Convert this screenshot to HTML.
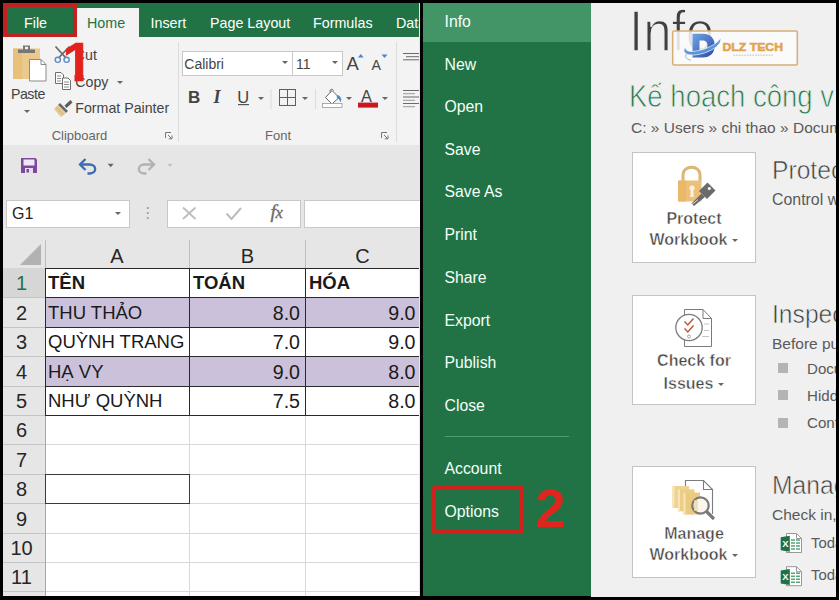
<!DOCTYPE html>
<html lang="vi">
<head>
<meta charset="utf-8">
<title>Excel File Options</title>
<style>
html,body{margin:0;padding:0;}
body{width:840px;height:600px;overflow:hidden;background:#000;position:relative;font-family:"Liberation Sans",sans-serif;}
.a{position:absolute;}
.t{position:absolute;white-space:nowrap;line-height:1;transform-origin:left center;}
#left{left:3px;top:3px;width:416.5px;height:593px;background:#e6e6e6;overflow:hidden;}
#tabs{left:0;top:0;width:416px;height:34px;background:#217346;}
#ribbon{left:0;top:34px;width:416px;height:108px;background:#f3f3f3;}
.tab{color:#fff;font-size:14.3px;}
.rt{color:#444;font-size:14.2px;}
.gl{color:#666;font-size:13px;}
.box{background:#fff;border:1px solid #c8c8c8;box-sizing:border-box;}
.arr{width:0;height:0;margin-left:0.5px;margin-top:0.3px;border-left:3px solid transparent;border-right:3px solid transparent;border-top:3.4px solid #666;}
#grid{left:0;top:237px;width:416px;height:356px;background:#fff;}
.hl{height:1px;background:#d9d9d9;left:42px;width:374px;}
.vl{width:1px;background:#d9d9d9;top:0;height:356px;}
.rn{width:42px;text-align:center;font-size:20px;color:#262626;left:-2.5px;}
.mi{color:#f4fff8;font-size:15.8px;}
.bt{color:#454545;font-size:16px;font-weight:bold;text-align:center;-webkit-text-stroke:0.45px #fff;}
.cell{font-size:18.5px;color:#1a1a1a;}
</style>
</head>
<body>
<div id="left" class="a">
  <!-- tab bar -->
  <div id="tabs" class="a">
    <div class="a" style="left:0;top:0;width:73.5px;height:34.5px;border:4px solid #c2211f;border-radius:1.5px;box-sizing:border-box;background:#217346;"></div>
    <div class="t tab" style="left:21px;top:12.5px;">File</div>
    <div class="a" style="left:74px;top:5px;width:62px;height:29px;background:#f3f3f3;"></div>
    <div class="t tab" style="left:84px;top:12.5px;color:#217346;">Home</div>
    <div class="t tab" style="left:147.5px;top:12.5px;">Insert</div>
    <div class="t tab" style="left:207px;top:12.5px;">Page Layout</div>
    <div class="t tab" style="left:310px;top:12.5px;">Formulas</div>
    <div class="t tab" style="left:393px;top:12.5px;">Data</div>
  </div>
  <!-- ribbon -->
  <div id="ribbon" class="a">
    <div class="t rt" style="left:8px;top:50.0px;letter-spacing:-0.5px;">Paste</div>
    <div class="a arr" style="left:20.5px;top:73px;border-top-color:#666;"></div>
    <div class="t rt" style="left:71.8px;top:10.5px;">Cut</div>
    <div class="t rt" style="left:72.3px;top:38.0px;">Copy</div>
    <div class="a arr" style="left:113.5px;top:43.5px;border-top-color:#666;"></div>
    <div class="t rt" style="left:72.3px;top:64.0px;">Format Painter</div>
    <div class="t gl" style="left:48.7px;top:91.6px;">Clipboard</div>
    <div class="a" style="left:175px;top:5px;width:1px;height:100px;background:#dcdcdc;"></div>
    <div class="a box" style="left:179px;top:13.5px;width:111px;height:25px;"></div>
    <div class="t rt" style="left:181.3px;top:20.1px;font-size:14px;">Calibri</div>
    <div class="a arr" style="left:278.9px;top:24px;border-top-color:#666;"></div>
    <div class="a box" style="left:289px;top:13.5px;width:50.5px;height:25px;"></div>
    <div class="t rt" style="left:293px;top:20.1px;font-size:14px;">11</div>
    <div class="a arr" style="left:328.7px;top:24px;border-top-color:#666;"></div>
    <div class="t rt" style="left:343.5px;top:17.6px;font-size:18.4px;">A</div>
    <div class="t rt" style="left:368.6px;top:21.1px;font-size:14.2px;">A</div>
    <div class="t rt" style="left:185px;top:51.5px;font-size:17px;font-weight:bold;">B</div>
    <div class="t rt" style="left:210.5px;top:51.0px;font-size:18px;font-style:italic;font-weight:bold;font-family:'Liberation Serif',serif;">I</div>
    <div class="t rt" style="left:234.3px;top:51.7px;font-size:16.5px;">U</div>
    <div class="a arr" style="left:254.4px;top:59.5px;border-top-color:#666;"></div>
    <div class="a arr" style="left:298.7px;top:59.5px;border-top-color:#666;"></div>
    <div class="a arr" style="left:342.5px;top:59.5px;border-top-color:#666;"></div>
    <div class="a arr" style="left:378.5px;top:59.5px;border-top-color:#666;"></div>
    <div class="t rt" style="left:358px;top:51.2px;font-size:16.3px;">A</div>
    <div class="t gl" style="left:262px;top:91.6px;">Font</div>
    <div class="a" style="left:392.5px;top:5px;width:1px;height:100px;background:#dcdcdc;"></div>
  </div>
  <!-- QAT -->
  <!-- formula bar -->
  <div class="a box" style="left:3px;top:197px;width:124px;height:28px;"></div>
  <div class="t" style="left:9px;top:203px;font-size:16px;color:#222;">G1</div>
  <div class="a arr" style="left:111px;top:209px;"></div>
  <div class="a box" style="left:164px;top:197px;width:134px;height:28px;"></div>
  <div class="a box" style="left:301px;top:197px;width:120px;height:28px;"></div>
  <!-- grid -->
  <div id="grid" class="a">
    <div class="a" style="left:0;top:0;width:416px;height:28px;background:#e6e6e6;"></div>
    <div class="a" style="left:0;top:0;width:42px;height:356px;background:#e6e6e6;"></div>
    <div class="a" style="left:0;top:28px;width:42px;height:29px;background:#d6d6d6;"></div>
    <svg class="a" style="left:17px;top:4px;" width="22" height="22" viewBox="0 0 22 22"><path d="M21 0V21H0Z" fill="#b2b2b2"/></svg>
    <div class="a" style="left:42px;top:0;width:1px;height:28px;background:#bdbdbd;"></div>
    <div class="a" style="left:186px;top:0;width:1px;height:28px;background:#bdbdbd;"></div>
    <div class="a" style="left:302px;top:0;width:1px;height:28px;background:#bdbdbd;"></div>
    <div class="t" style="left:94px;top:5.5px;width:40px;text-align:center;font-size:20px;color:#262626;">A</div>
    <div class="t" style="left:224.5px;top:5.5px;width:40px;text-align:center;font-size:20px;color:#262626;">B</div>
    <div class="t" style="left:339.5px;top:5.5px;width:40px;text-align:center;font-size:20px;color:#262626;">C</div>
    <div class="a hl" style="top:204px;"></div>
    <div class="a hl" style="top:234px;"></div>
    <div class="a hl" style="top:263px;"></div>
    <div class="a hl" style="top:293px;"></div>
    <div class="a hl" style="top:322px;"></div>
    <div class="a hl" style="top:351px;"></div>
    <div class="a" style="left:0;top:57px;width:42px;height:1px;background:#c4c4c4;"></div>
    <div class="a" style="left:0;top:87px;width:42px;height:1px;background:#c4c4c4;"></div>
    <div class="a" style="left:0;top:116px;width:42px;height:1px;background:#c4c4c4;"></div>
    <div class="a" style="left:0;top:146px;width:42px;height:1px;background:#c4c4c4;"></div>
    <div class="a" style="left:0;top:175px;width:42px;height:1px;background:#c4c4c4;"></div>
    <div class="a" style="left:0;top:204px;width:42px;height:1px;background:#c4c4c4;"></div>
    <div class="a" style="left:0;top:234px;width:42px;height:1px;background:#c4c4c4;"></div>
    <div class="a" style="left:0;top:263px;width:42px;height:1px;background:#c4c4c4;"></div>
    <div class="a" style="left:0;top:293px;width:42px;height:1px;background:#c4c4c4;"></div>
    <div class="a" style="left:0;top:322px;width:42px;height:1px;background:#c4c4c4;"></div>
    <div class="a" style="left:0;top:351px;width:42px;height:1px;background:#c4c4c4;"></div>
    <div class="a vl" style="left:186px;top:176px;height:180px;"></div>
    <div class="a vl" style="left:302px;top:176px;height:180px;"></div>
    <div class="a" style="left:42px;top:176px;width:1px;height:180px;background:#a8a8a8;"></div>
    <div class="a" style="left:43px;top:58px;width:373px;height:29px;background:#ccc1da;"></div>
    <div class="a" style="left:43px;top:117px;width:373px;height:29px;background:#ccc1da;"></div>
    <div class="a" style="left:42px;top:28px;width:374px;height:1px;background:#2a2a2a;"></div>
    <div class="a" style="left:42px;top:57px;width:374px;height:1px;background:#2a2a2a;"></div>
    <div class="a" style="left:42px;top:87px;width:374px;height:1px;background:#2a2a2a;"></div>
    <div class="a" style="left:42px;top:116px;width:374px;height:1px;background:#2a2a2a;"></div>
    <div class="a" style="left:42px;top:146px;width:374px;height:1px;background:#2a2a2a;"></div>
    <div class="a" style="left:42px;top:175px;width:374px;height:1px;background:#2a2a2a;"></div>
    <div class="a" style="left:42px;top:28px;width:1px;height:148px;background:#2a2a2a;"></div>
    <div class="a" style="left:186px;top:28px;width:1px;height:148px;background:#2a2a2a;"></div>
    <div class="a" style="left:302px;top:28px;width:1px;height:148px;background:#2a2a2a;"></div>
    <div class="t rn" style="top:33.0px;color:#217346;">1</div>
    <div class="t rn" style="top:62.5px;color:#262626;">2</div>
    <div class="t rn" style="top:92.0px;color:#262626;">3</div>
    <div class="t rn" style="top:121.5px;color:#262626;">4</div>
    <div class="t rn" style="top:151.0px;color:#262626;">5</div>
    <div class="t rn" style="top:180.0px;color:#262626;">6</div>
    <div class="t rn" style="top:209.5px;color:#262626;">7</div>
    <div class="t rn" style="top:239.0px;color:#262626;">8</div>
    <div class="t rn" style="top:268.5px;color:#262626;">9</div>
    <div class="t rn" style="top:298.0px;color:#262626;">10</div>
    <div class="t rn" style="top:327.0px;color:#262626;">11</div>
    <div class="t cell" style="left:45px;top:34.3px;font-weight:bold;">TÊN</div>
    <div class="t cell" style="left:190px;top:34.3px;font-weight:bold;">TOÁN</div>
    <div class="t cell" style="left:306px;top:34.3px;font-weight:bold;">HÓA</div>
    <div class="t cell" style="left:45px;top:63.8px;">THU THẢO</div>
    <div class="t cell" style="left:187px;width:110px;text-align:right;top:63.599999999999994px;font-size:19.6px;">8.0</div>
    <div class="t cell" style="left:303px;width:109.5px;text-align:right;top:63.599999999999994px;font-size:19.6px;">9.0</div>
    <div class="t cell" style="left:45px;top:93.3px;">QUỲNH TRANG</div>
    <div class="t cell" style="left:187px;width:110px;text-align:right;top:93.1px;font-size:19.6px;">7.0</div>
    <div class="t cell" style="left:303px;width:109.5px;text-align:right;top:93.1px;font-size:19.6px;">9.0</div>
    <div class="t cell" style="left:45px;top:122.8px;">HẠ VY</div>
    <div class="t cell" style="left:187px;width:110px;text-align:right;top:122.6px;font-size:19.6px;">9.0</div>
    <div class="t cell" style="left:303px;width:109.5px;text-align:right;top:122.6px;font-size:19.6px;">8.0</div>
    <div class="t cell" style="left:45px;top:152.3px;">NHƯ QUỲNH</div>
    <div class="t cell" style="left:187px;width:110px;text-align:right;top:152.10000000000002px;font-size:19.6px;">7.5</div>
    <div class="t cell" style="left:303px;width:109.5px;text-align:right;top:152.10000000000002px;font-size:19.6px;">8.0</div>
    <div class="a" style="left:42px;top:234px;width:145px;height:30px;border:1px solid #3a3a3a;box-sizing:border-box;"></div>
  </div>
</div>
<div id="menu" class="a" style="left:422.5px;top:3px;width:168.5px;height:593px;background:#217346;">
  <div class="a" style="left:0;top:0;width:169px;height:39px;background:#439467;"></div>
  <div class="t mi" style="left:22px;top:10.8px;">Info</div>
  <div class="t mi" style="left:22px;top:53.8px;">New</div>
  <div class="t mi" style="left:22px;top:95.8px;">Open</div>
  <div class="t mi" style="left:22px;top:138.8px;">Save</div>
  <div class="t mi" style="left:22px;top:180.8px;">Save As</div>
  <div class="t mi" style="left:22px;top:223.8px;">Print</div>
  <div class="t mi" style="left:22px;top:266.8px;">Share</div>
  <div class="t mi" style="left:22px;top:309.8px;">Export</div>
  <div class="t mi" style="left:22px;top:351.8px;">Publish</div>
  <div class="t mi" style="left:22px;top:394.8px;">Close</div>
  <div class="t mi" style="left:22px;top:457.5px;">Account</div>
  <div class="t mi" style="left:22px;top:501.0px;">Options</div>
  <div class="a" style="left:22px;top:433px;width:124px;height:1px;background:#4e9a70;"></div>
  <div class="a" style="left:9.5px;top:482.5px;width:92px;height:48px;border:4px solid #cf221d;border-radius:1.5px;box-sizing:border-box;"></div>
  <div class="t" style="left:113px;top:478px;font-size:54px;font-weight:bold;color:#e0251f;">2</div>
</div>
<div id="info" class="a" style="left:591px;top:3px;width:245px;height:594px;background:#f0f0f0;overflow:hidden;">
  <div class="t" style="left:37.5px;top:-1.4px;font-size:58px;color:#404040;transform:scaleX(0.88);-webkit-text-stroke:1.5px #f0f0f0;">Info</div>
  <div class="t" style="left:38px;top:78.3px;font-size:31px;color:#257a4c;transform:scaleX(0.888);-webkit-text-stroke:0.8px #f0f0f0;">Kế hoạch công v<span style="margin-left:4px">iệc</span></div>
  <div class="t" style="left:40px;top:117.4px;font-size:15.5px;color:#5a5a5a;">C: » Users » chi thao » Documents</div>
  <div class="a box" style="left:41px;top:148.5px;width:124px;height:111.0px;border-color:#c4c4c4;"></div>
  <div class="t bt" style="left:41px;width:124px;top:207.6px;">Protect</div>
  <div class="t bt" style="left:41px;width:124px;top:228.7px;">Workbook<span class="arr" style="display:inline-block;vertical-align:middle;margin-left:5px;border-top-color:#666;"></span></div>
  <div class="a box" style="left:41px;top:292px;width:124px;height:110px;border-color:#c4c4c4;"></div>
  <div class="t bt" style="left:41px;width:124px;top:350.2px;">Check for</div>
  <div class="t bt" style="left:41px;width:124px;top:372.8px;">Issues<span class="arr" style="display:inline-block;vertical-align:middle;margin-left:5px;border-top-color:#666;"></span></div>
  <div class="a box" style="left:41px;top:463px;width:124px;height:111.5px;border-color:#c4c4c4;"></div>
  <div class="t bt" style="left:41px;width:124px;top:523.0px;">Manage</div>
  <div class="t bt" style="left:41px;width:124px;top:543.8px;">Workbook<span class="arr" style="display:inline-block;vertical-align:middle;margin-left:5px;border-top-color:#666;"></span></div>
  <div class="t" style="left:181px;top:153.5px;font-size:26.5px;color:#3c3c3c;transform:scaleX(0.93);-webkit-text-stroke:0.6px #f0f0f0;">Protect Workbook</div>
  <div class="t" style="left:181px;top:189.1px;font-size:15.9px;color:#5a5a5a;">Control what types</div>
  <div class="t" style="left:181px;top:298.0px;font-size:26.5px;color:#3c3c3c;transform:scaleX(0.93);-webkit-text-stroke:0.6px #f0f0f0;">Inspect Workbook</div>
  <div class="t" style="left:181px;top:333.4px;font-size:15.5px;color:#5a5a5a;">Before publishing</div>
  <div class="a" style="left:187px;top:360px;width:10px;height:10px;background:#b4b4b4;"></div>
  <div class="t" style="left:216px;top:357.9px;font-size:15.1px;color:#5a5a5a;">Document</div>
  <div class="a" style="left:187px;top:387px;width:10px;height:10px;background:#b4b4b4;"></div>
  <div class="t" style="left:216px;top:384.9px;font-size:15.1px;color:#5a5a5a;">Hidden</div>
  <div class="a" style="left:187px;top:414.5px;width:10px;height:10px;background:#b4b4b4;"></div>
  <div class="t" style="left:216px;top:412.4px;font-size:15.1px;color:#5a5a5a;">Content</div>
  <div class="t" style="left:181px;top:468.6px;font-size:26.5px;color:#3c3c3c;transform:scaleX(0.93);-webkit-text-stroke:0.6px #f0f0f0;">Manage Workbook</div>
  <div class="t" style="left:181px;top:503.8px;font-size:15.5px;color:#5a5a5a;">Check in, check out</div>
  <div class="t" style="left:220px;top:532.7px;font-size:14.9px;color:#5a5a5a;">Today</div>
  <div class="t" style="left:220px;top:565.4px;font-size:14.9px;color:#5a5a5a;">Today</div>
</div>
<div class="a" style="left:836px;top:0;width:3px;height:600px;background:#000;"></div>
<div class="a" style="left:839px;top:0;width:1px;height:600px;background:#fff;"></div>
<!--ICONS-->
<svg class="a" width="840" height="600" viewBox="0 0 840 600" style="left:0;top:0;font-family:'Liberation Sans',sans-serif;">
  <!-- paste clipboard -->
  <g>
    <rect x="13" y="48.5" width="27" height="30.5" fill="#ebc98b"/>
    <rect x="13" y="48.5" width="9" height="30.5" fill="#e8c07a"/>
    <path d="M18 53V49.5H23V45.5H30V49.5H35V53Z" fill="#777"/>
    <rect x="25" y="46.8" width="3" height="2.4" fill="#f3f3f3"/>
    <path d="M29.5 59.5H41L46 64.5V81H29.5Z" fill="#fff" stroke="#8a8a8a" stroke-width="1"/>
    <path d="M41 59.5V64.5H46" fill="none" stroke="#8a8a8a" stroke-width="1"/>
  </g>
  <!-- scissors -->
  <g fill="none">
    <path d="M55.5 46.5L66 58M69.5 46.5L58.5 58" stroke="#6b6b6b" stroke-width="1.8"/>
    <circle cx="57.8" cy="59.8" r="2.6" stroke="#5b8cc6" stroke-width="1.4"/>
    <circle cx="66.6" cy="59.8" r="2.6" stroke="#5b8cc6" stroke-width="1.4"/>
  </g>
  <!-- copy -->
  <g fill="#fff" stroke="#6e6e6e" stroke-width="1">
    <path d="M55.5 72.5H61L63.5 75V83.5H55.5Z"/>
    <path d="M57 76H61M57 78.5H61M57 81H61" stroke-width="0.8"/>
    <path d="M62.5 78H68L70.5 80.5V89.5H62.5Z"/>
    <path d="M64 82H69M64 84.5H69M64 87H69" stroke-width="0.8"/>
  </g>
  <!-- format painter -->
  <g>
    <path d="M64.5 105.5L70.5 100L72.5 102.5L66.5 108Z" fill="#5c5c5c"/>
    <path d="M60 103L68 111L66 113L58 105Z" fill="#6a6a6a"/>
    <path d="M58 105L66 113L61 117L54 109Z" fill="#e3c98f"/>
    <path d="M56 107L63.5 115" stroke="#cfb070" stroke-width="0.8"/>
  </g>
  <!-- dialog launchers -->
  <g fill="none" stroke="#777" stroke-width="1">
    <path d="M171 132.5H165.5V138"/><path d="M168 135L171.5 138.5M172 135.5V138.8H168.8"/>
    <path d="M387 132.5H381.5V138"/><path d="M384 135L387.5 138.5M388 135.5V138.8H384.8"/>
  </g>
  <!-- grow / shrink markers -->
  <path d="M358 57.5L360.8 54L363.6 57.5Z" fill="#4d86c6"/>
  <path d="M381.5 54.5H387.5L384.5 58Z" fill="#4d86c6"/>
  <!-- U underline -->
  <rect x="238" y="104" width="11" height="1.2" fill="#555"/>
  <!-- small separators in font row -->
  <rect x="270.5" y="89" width="1" height="20" fill="#dcdcdc"/>
  <rect x="315" y="89" width="1" height="20" fill="#dcdcdc"/>
  <!-- borders icon -->
  <g fill="none" stroke="#5e5e5e" stroke-width="1">
    <rect x="279.5" y="89.5" width="16" height="16"/>
    <path d="M287.5 89.5V105.5M279.5 97.5H295.5"/>
  </g>
  <!-- fill bucket -->
  <g fill="none">
    <path d="M332 90.5L339 97.5L332 104L325.5 97.5Z" fill="#fff" stroke="#666" stroke-width="1"/>
    <path d="M330.5 92.5C329 89.5 332 88 333.5 90.5" stroke="#666" stroke-width="1"/>
    <path d="M337.5 95.5C340 96 341.5 98.5 340.5 101.5C339.5 99 338.5 98 337 97.5Z" fill="#4d86c6" stroke="#4d86c6" stroke-width="0.8"/>
    <rect x="322.5" y="103.5" width="19.5" height="4" fill="#fff" stroke="#999" stroke-width="0.8"/>
  </g>
  <!-- font color bar -->
  <rect x="358" y="102.6" width="20" height="5" fill="#c9171e"/>
  <!-- align icons at right edge -->
  <g stroke="#6a6a6a" stroke-width="1">
    <path d="M403 53.5H419M406 56.7H419M403 59.8H419" />
    <path d="M403 90.5H419M403 97H419M403 103.5H419"/>
    <path d="M403 93.7H415M403 100.3H415M403 106.7H415" stroke="#9a9a9a"/>
  </g>
  <!-- save -->
  <g>
    <path d="M21 158H35.5L37 159.5V173H21Z" fill="#7c4a9c"/>
    <rect x="23.5" y="159.5" width="11" height="6" fill="#f0e8f4"/>
    <rect x="25" y="168" width="8" height="5" fill="#e6dcec"/>
    <rect x="26.5" y="169" width="2.5" height="3.5" fill="#7c4a9c"/>
  </g>
  <!-- undo -->
  <g fill="none" stroke="#3c6cb2" stroke-width="2.3">
    <path d="M80.5 164.5H89.5C97 164.5 97 173 90 173.5H87.5"/>
    <path d="M85.5 159L80 164.5L85.5 170"/>
  </g>
  <!-- redo -->
  <g fill="none" stroke="#b2b2b2" stroke-width="2.3">
    <path d="M153.5 164.5H144.5C137 164.5 137 173 144 173.5H146.5"/>
    <path d="M148.5 159L154 164.5L148.5 170"/>
  </g>
  <path d="M107.7 163.8H113.7L110.7 167.2Z" fill="#666"/>
  <path d="M167.2 163.8H172.8L170 167Z" fill="#c6c6c6"/>
  <!-- formula bar dots -->
  <g fill="#9a9a9a"><circle cx="147.8" cy="208" r="1.1"/><circle cx="147.8" cy="213" r="1.1"/><circle cx="147.8" cy="218" r="1.1"/></g>
  <!-- X and check -->
  <path d="M183 207.5L195.5 219M195.5 207.5L183 219" stroke="#bdbdbd" stroke-width="1.8" fill="none"/>
  <path d="M226.5 213.5L231.5 219L241 208" stroke="#bdbdbd" stroke-width="2" fill="none"/>
  <!-- fx -->
  <text x="270.5" y="218.3" style="font-family:'Liberation Serif',serif;" font-style="italic" font-size="19.5" fill="#6a6a6a" stroke="#6a6a6a" stroke-width="0.35">f<tspan font-size="16.5" dx="-0.3">x</tspan></text>
  <!-- red number 1 -->
  <clipPath id="c1"><rect x="55" y="36" width="40" height="38.6"/><rect x="74.5" y="74" width="9" height="10"/></clipPath>
  <text x="62.5" y="80.9" font-size="55" font-weight="bold" fill="#e3221c" stroke="#e3221c" stroke-width="0.7" clip-path="url(#c1)">1</text>
  <!-- lock + key -->
  <g>
    <path d="M683 181.5V175C683 164.5 700 164.5 700 175V181.5" fill="none" stroke="#dcb676" stroke-width="3"/>
    <rect x="678" y="180.5" width="23.5" height="21" rx="1" fill="#ecc078"/>
    <rect x="678" y="180.5" width="8" height="21" rx="1" fill="#e9b868"/>
    <circle cx="692" cy="188" r="2.6" fill="#fbf1dc"/>
    <path d="M690.8 189H693.2L693.8 197H690.2Z" fill="#fbf1dc"/>
    <path d="M707.5 182.5L715.5 190.5L707 199L699 191Z" fill="#6b6b6b"/>
    <path d="M701.5 193.5L705 197L694 206L691.5 203.5Z" fill="#6b6b6b"/>
    <path d="M692 204.5L698 199.5" stroke="#e9e9e9" stroke-width="0.9"/>
    <circle cx="709.3" cy="188.6" r="1.5" fill="#fff"/>
  </g>
  <!-- check for issues -->
  <g fill="none">
    <path d="M684.5 309.5H703L711.5 318.5V346.5H684.5Z" fill="#fff" stroke="#7a7a7a" stroke-width="1"/>
    <path d="M703 309.5V318.5H711.5" stroke="#7a7a7a" stroke-width="1"/>
    <path d="M704 324H709M704 330.5H709M702 336.5H709" stroke="#c4c4c4" stroke-width="1"/>
    <circle cx="689" cy="327.5" r="13.2" fill="#fff" stroke="#7c7c7c" stroke-width="1.3"/>
    <path d="M684.5 321.5L687.8 325L693.5 318.5" stroke="#b9573a" stroke-width="1.4"/>
    <path d="M684.5 328.5L687.8 332L693.5 325.5" stroke="#b9573a" stroke-width="1.4"/>
    <circle cx="689" cy="336.5" r="1.5" stroke="#9a9a9a" stroke-width="0.9"/>
  </g>
  <!-- manage workbook -->
  <g fill="none">
    <path d="M685.5 486V480.5H703.5L712.5 489.5V514" stroke="#7c7c7c" stroke-width="1.1"/>
    <path d="M703.5 480.5V489.5H712.5" stroke="#7c7c7c" stroke-width="1.1"/>
    <rect x="672.5" y="486" width="16.5" height="22" fill="#eed392"/><rect x="672.5" y="486" width="2" height="22" fill="#f6e5b6"/>
    <rect x="678" y="489.3" width="16.5" height="22" fill="#ecce88"/><rect x="678" y="489.3" width="2" height="22" fill="#f6e5b6"/>
    <rect x="683.5" y="492.6" width="16.5" height="22" fill="#ebca80"/><rect x="683.5" y="492.6" width="2" height="22" fill="#f6e5b6"/>
    <circle cx="700.5" cy="505.5" r="8.2" fill="#fbf6ea" stroke="#7a7a7a" stroke-width="2.2"/>
    <path d="M694 500H698V511H694Z" fill="#eed9a6" opacity="0.8"/>
    <path d="M706.5 511.5L714 519" stroke="#7a7a7a" stroke-width="3.2"/>
  </g>
  <!-- excel file icons -->
  <g id="xl1">
    <path d="M786.5 533.5H796.5L801.5 538.5V552.5H786.5Z" fill="#fff" stroke="#8c8c8c" stroke-width="0.9"/>
    <path d="M796.5 533.5V538.5H801.5" fill="none" stroke="#8c8c8c" stroke-width="0.9"/>
    <path d="M791 540H795M796 540H800M791 543H795M796 543H800M791 546H795M796 546H800M791 549H795M796 549H800" stroke="#5aa37c" stroke-width="1.6"/>
    <path d="M780.7 537.3L789.8 535.8V551.8L780.7 550.2Z" fill="#1f7246"/>
    <text x="782.3" y="547.3" font-size="9.5" font-weight="bold" fill="#fff">X</text>
  </g>
  <g id="xl2" transform="translate(0,33.2)">
    <path d="M786.5 533.5H796.5L801.5 538.5V552.5H786.5Z" fill="#fff" stroke="#8c8c8c" stroke-width="0.9"/>
    <path d="M796.5 533.5V538.5H801.5" fill="none" stroke="#8c8c8c" stroke-width="0.9"/>
    <path d="M791 540H795M796 540H800M791 543H795M796 543H800M791 546H795M796 546H800M791 549H795M796 549H800" stroke="#5aa37c" stroke-width="1.6"/>
    <path d="M780.7 537.3L789.8 535.8V551.8L780.7 550.2Z" fill="#1f7246"/>
    <text x="782.3" y="547.3" font-size="9.5" font-weight="bold" fill="#fff">X</text>
  </g>
  <!-- DLZ TECH watermark -->
  <g>
    <rect x="672.7" y="31" width="124.6" height="34" rx="1.5" fill="#fbfbfb" fill-opacity="0.86" stroke="#d8ae76" stroke-width="1.5"/>
    <defs><linearGradient id="dg" x1="0" y1="0" x2="1" y2="1"><stop offset="0" stop-color="#6fa5e4"/><stop offset="0.55" stop-color="#4a72c4"/><stop offset="1" stop-color="#2f4796"/></linearGradient></defs>
    <path fill-rule="evenodd" d="M692.5 33.8H703C711 33.8 714.8 39 714.8 45.5C714.8 52.5 710.5 57.6 702.5 57.6H692.5ZM699.5 40.5V50.5H702C706 50.5 707.5 48.3 707.5 45.6C707.5 42.6 706 40.5 702 40.5Z" fill="url(#dg)"/>
    <path d="M720.5 38.3C722.5 45.5 708 54 694 55C686 55.5 682 52 685 47.3C685.5 50.8 689 52 695 51.2C706 49.8 717.5 43.8 720.5 38.3Z" fill="#5b93d9" stroke="#f4f8fd" stroke-width="0.7"/>
    <path d="M686.5 54C684.5 56.5 686 59.5 691 60.2" fill="none" stroke="#8ab4e6" stroke-width="0.9"/>
    <text x="722.5" y="50.8" font-size="11.8" font-weight="bold" fill="#e2a24c" stroke="#e2a24c" stroke-width="0.5" textLength="60.5" lengthAdjust="spacingAndGlyphs">DLZ TECH</text>
    <path d="M733.5 55.2H774" stroke="#9a8f80" stroke-width="0.9" stroke-dasharray="1.6 1.1" opacity="0.6"/>
  </g>
</svg>
<!--/ICONS-->
</body>
</html>
